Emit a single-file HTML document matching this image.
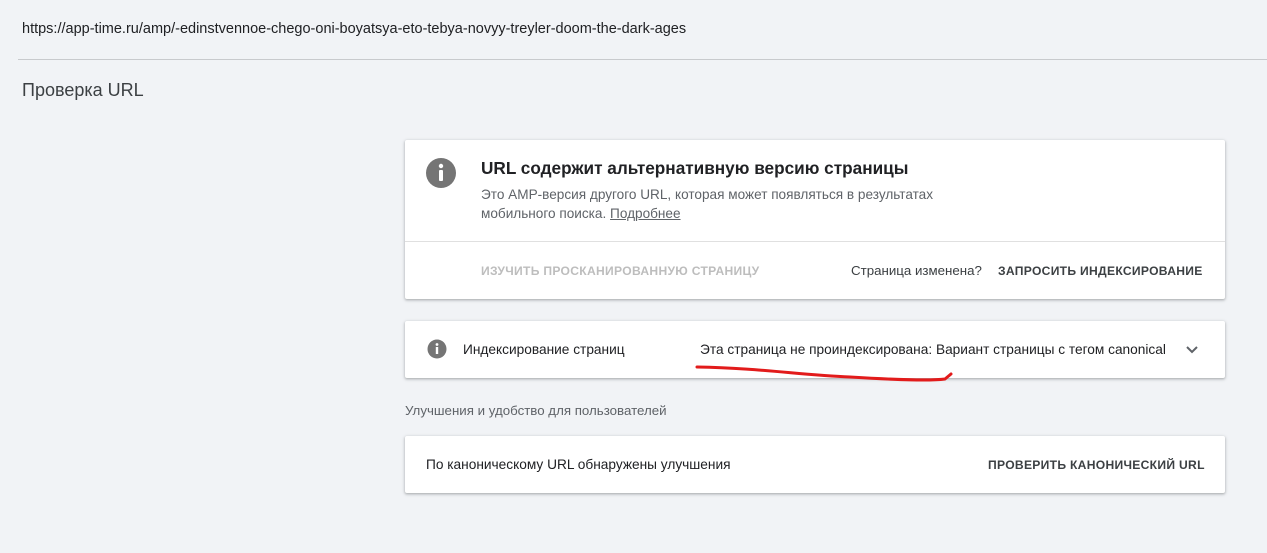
<!DOCTYPE html>
<html><head><meta charset="utf-8"><style>
body{margin:0;width:1267px;height:553px;background:#f1f3f6;font-family:"Liberation Sans",Arial,sans-serif;position:relative;overflow:hidden;color:#202124}
.a{position:absolute;white-space:nowrap}
.card{position:absolute;background:#fff;box-shadow:0 1px 2px rgba(60,64,67,.3),0 1px 3px 1px rgba(60,64,67,.12);border-radius:2px}
.btn{font-size:12.1px;font-weight:bold;letter-spacing:.3px;color:#3c4043}
</style></head><body>
<div class="a" style="left:22px;top:21px;font-size:14.5px;color:#202124">https://app-time.ru/amp/-edinstvennoe-chego-oni-boyatsya-eto-tebya-novyy-treyler-doom-the-dark-ages</div>
<div class="a" style="left:18px;right:0;top:59px;height:1px;background:#c8cacd"></div>
<div class="a" style="left:22px;top:80px;font-size:18px;color:#3c4043">Проверка URL</div>

<div class="card" style="left:405px;top:140px;width:820px;height:159px">
  <svg class="a" style="left:20px;top:17px" width="32" height="32" viewBox="0 0 32 32"><circle cx="16" cy="16" r="15" fill="#757575"/><rect x="14" y="13" width="4" height="11" rx="1" fill="#fff"/><circle cx="16" cy="9" r="2.2" fill="#fff"/></svg>
  <div class="a" style="left:76px;top:18px;font-size:17.2px;font-weight:bold;color:#202124">URL содержит альтернативную версию страницы</div>
  <div class="a" style="left:76px;top:45px;font-size:13.6px;line-height:19px;color:#5f6368;white-space:normal;width:470px">Это AMP-версия другого URL, которая может появляться в результатах мобильного поиска. <u>Подробнее</u></div>
  <div class="a" style="left:0;right:0;top:101px;height:1px;background:#e0e0e0"></div>
  <div class="a btn" style="left:76px;top:124px;color:#bdbdbd">ИЗУЧИТЬ ПРОСКАНИРОВАННУЮ СТРАНИЦУ</div>
  <div class="a" style="left:446px;top:123px;font-size:13.3px;color:#3c4043">Страница изменена?</div>
  <div class="a btn" style="left:593px;top:124px">ЗАПРОСИТЬ ИНДЕКСИРОВАНИЕ</div>
</div>

<div class="card" style="left:405px;top:321px;width:820px;height:57px">
  <svg class="a" style="left:22px;top:18px" width="20" height="20" viewBox="0 0 20 20"><circle cx="10" cy="10" r="9.5" fill="#757575"/><rect x="8.8" y="8" width="2.4" height="7" fill="#fff"/><circle cx="10" cy="5.5" r="1.4" fill="#fff"/></svg>
  <div class="a" style="left:58px;top:21px;font-size:13.7px">Индексирование страниц</div>
  <div class="a" style="left:295px;top:21px;font-size:13.7px">Эта страница не проиндексирована: Вариант страницы с тегом canonical</div>
  <svg class="a" style="left:780px;top:24px" width="14" height="10" viewBox="0 0 14 10"><path d="M2 2l5 5 5-5" stroke="#5f6368" stroke-width="2" fill="none"/></svg>
</div>
<svg class="a" style="left:0;top:0" width="1267" height="553"><path d="M697 367 C760 368 800 375 850 377 C900 380 930 381 945 379 L951 374" stroke="#e21b1b" stroke-width="3" fill="none" stroke-linecap="round"/></svg>

<div class="a" style="left:405px;top:403px;font-size:13.3px;color:#5f6368">Улучшения и удобство для пользователей</div>
<div class="card" style="left:405px;top:436px;width:820px;height:57px">
  <div class="a" style="left:21px;top:21px;font-size:13.7px">По каноническому URL обнаружены улучшения</div>
  <div class="a btn" style="left:583px;top:22px">ПРОВЕРИТЬ КАНОНИЧЕСКИЙ URL</div>
</div>
</body></html>
